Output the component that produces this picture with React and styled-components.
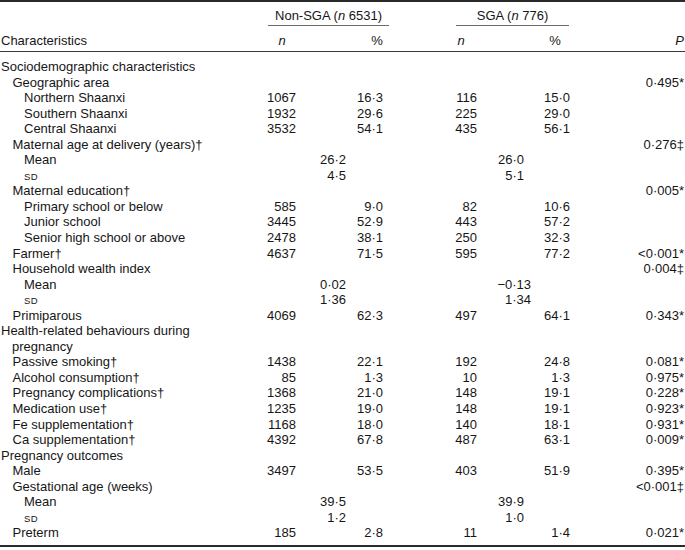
import React from 'react'
import styled, { createGlobalStyle } from 'styled-components'

const GlobalStyle = createGlobalStyle`
  html, body {
    margin: 0;
    padding: 0;
    background: #ffffff;
  }
  body {
    font-family: "Liberation Sans", Arial, Helvetica, sans-serif;
    color: #161616;
    font-size: 13px;
  }
`

const COLS = '250px 50px 87px 94px 93px 111px'

const Table = styled.div`
  width: 685px;
  border-top: 2px solid #2a2a2a;
  border-bottom: 2px solid #2a2a2a;
`

const GroupRow = styled.div`
  display: grid;
  grid-template-columns: 268px 121px 67px 113px 116px;
  padding-top: 6px;
  line-height: 15px;
`

const Group = styled.div`
  grid-column: ${p => p.$col};
  text-align: center;
  padding-bottom: 2px;
  border-bottom: 1px solid #6a6a6a;
`

const HeadRow = styled.div`
  display: grid;
  grid-template-columns: ${COLS};
  line-height: 15px;
  padding: 7px 0 3px;
  border-bottom: 1.5px solid #3a3a3a;
`

const HeadCell = styled.div`
  text-align: ${p => p.$align || 'right'};
  padding-right: ${p => p.$pr ?? 4}px;
  padding-left: ${p => p.$pl ?? 0}px;
`

const Body = styled.div`
  padding: 7px 0 4px;
`

const Row = styled.div`
  display: grid;
  grid-template-columns: ${COLS};
  line-height: 15.55px;
`

const Label = styled.div`
  padding-left: ${p => p.$level * 11.5 + 1 + 11}px;
  text-indent: -11px;
  max-width: 200px;
`

const Small = styled.span`
  font-size: 9.5px;
  line-height: 0;
  letter-spacing: 0.3px;
`

const Num = styled.div`
  text-align: right;
  padding-right: ${p => p.$pr ?? 4}px;
`

const Span = styled.div`
  grid-column: span 2;
  text-align: right;
  padding-right: ${p => p.$pr}px;
`

const I = styled.i`
  font-style: italic;
`

const rows = [
  { l: 0, t: 'Sociodemographic characteristics' },
  { l: 1, t: 'Geographic area', p: '0·495*' },
  { l: 2, t: 'Northern Shaanxi', v: ['1067', '16·3', '116', '15·0'] },
  { l: 2, t: 'Southern Shaanxi', v: ['1932', '29·6', '225', '29·0'] },
  { l: 2, t: 'Central Shaanxi', v: ['3532', '54·1', '435', '56·1'] },
  { l: 1, t: 'Maternal age at delivery (years)†', p: '0·276‡' },
  { l: 2, t: 'Mean', m: ['26·2', '26·0'] },
  { l: 2, sd: true, m: ['4·5', '5·1'] },
  { l: 1, t: 'Maternal education†', p: '0·005*' },
  { l: 2, t: 'Primary school or below', v: ['585', '9·0', '82', '10·6'] },
  { l: 2, t: 'Junior school', v: ['3445', '52·9', '443', '57·2'] },
  { l: 2, t: 'Senior high school or above', v: ['2478', '38·1', '250', '32·3'] },
  { l: 1, t: 'Farmer†', v: ['4637', '71·5', '595', '77·2'], p: '<0·001*' },
  { l: 1, t: 'Household wealth index', p: '0·004‡' },
  { l: 2, t: 'Mean', m: ['0·02', '−0·13'] },
  { l: 2, sd: true, m: ['1·36', '1·34'] },
  { l: 1, t: 'Primiparous', v: ['4069', '62·3', '497', '64·1'], p: '0·343*' },
  { l: 0, t: 'Health-related behaviours during pregnancy' },
  { l: 1, t: 'Passive smoking†', v: ['1438', '22·1', '192', '24·8'], p: '0·081*' },
  { l: 1, t: 'Alcohol consumption†', v: ['85', '1·3', '10', '1·3'], p: '0·975*' },
  { l: 1, t: 'Pregnancy complications†', v: ['1368', '21·0', '148', '19·1'], p: '0·228*' },
  { l: 1, t: 'Medication use†', v: ['1235', '19·0', '148', '19·1'], p: '0·923*' },
  { l: 1, t: 'Fe supplementation†', v: ['1168', '18·0', '140', '18·1'], p: '0·931*' },
  { l: 1, t: 'Ca supplementation†', v: ['4392', '67·8', '487', '63·1'], p: '0·009*' },
  { l: 0, t: 'Pregnancy outcomes' },
  { l: 1, t: 'Male', v: ['3497', '53·5', '403', '51·9'], p: '0·395*' },
  { l: 1, t: 'Gestational age (weeks)', p: '<0·001‡' },
  { l: 2, t: 'Mean', m: ['39·5', '39·9'] },
  { l: 2, sd: true, m: ['1·2', '1·0'] },
  { l: 1, t: 'Preterm', v: ['185', '2·8', '11', '1·4'], p: '0·021*' },
]

// decimals beyond one push the SGA summary value right
const sgaPad = (s) => (s.split('·')[1].length > 1 ? 43 : 50)

const DataRow = ({ r }) => (
  <Row>
    <Label $level={r.l}>{r.sd ? <Small>SD</Small> : r.t}</Label>
    {r.v ? (
      <>
        <Num>{r.v[0]}</Num>
        <Num>{r.v[1]}</Num>
        <Num>{r.v[2]}</Num>
        <Num>{r.v[3]}</Num>
      </>
    ) : r.m ? (
      <>
        <Span $pr={41}>{r.m[0]}</Span>
        <Span $pr={sgaPad(r.m[1])}>{r.m[1]}</Span>
      </>
    ) : (
      <>
        <Num />
        <Num />
        <Num />
        <Num />
      </>
    )}
    <Num $pr={1}>{r.p || ''}</Num>
  </Row>
)

export default function App() {
  return (
    <>
      <GlobalStyle />
      <Table>
        <GroupRow>
          <Group $col="2">Non-SGA (<I>n</I> 6531)</Group>
          <Group $col="4">SGA (<I>n</I> 776)</Group>
        </GroupRow>
        <HeadRow>
          <HeadCell $align="left" $pl={1}>Characteristics</HeadCell>
          <HeadCell $align="center" $pr={0} $pl={14}><I>n</I></HeadCell>
          <HeadCell $align="center" $pr={0} $pl={67}>%</HeadCell>
          <HeadCell $align="center" $pr={0} $pl={54}><I>n</I></HeadCell>
          <HeadCell $align="center" $pr={0} $pl={55}>%</HeadCell>
          <HeadCell $pr={1}><I>P</I></HeadCell>
        </HeadRow>
        <Body>
          {rows.map((r, i) => (
            <DataRow key={i} r={r} />
          ))}
        </Body>
      </Table>
    </>
  )
}
